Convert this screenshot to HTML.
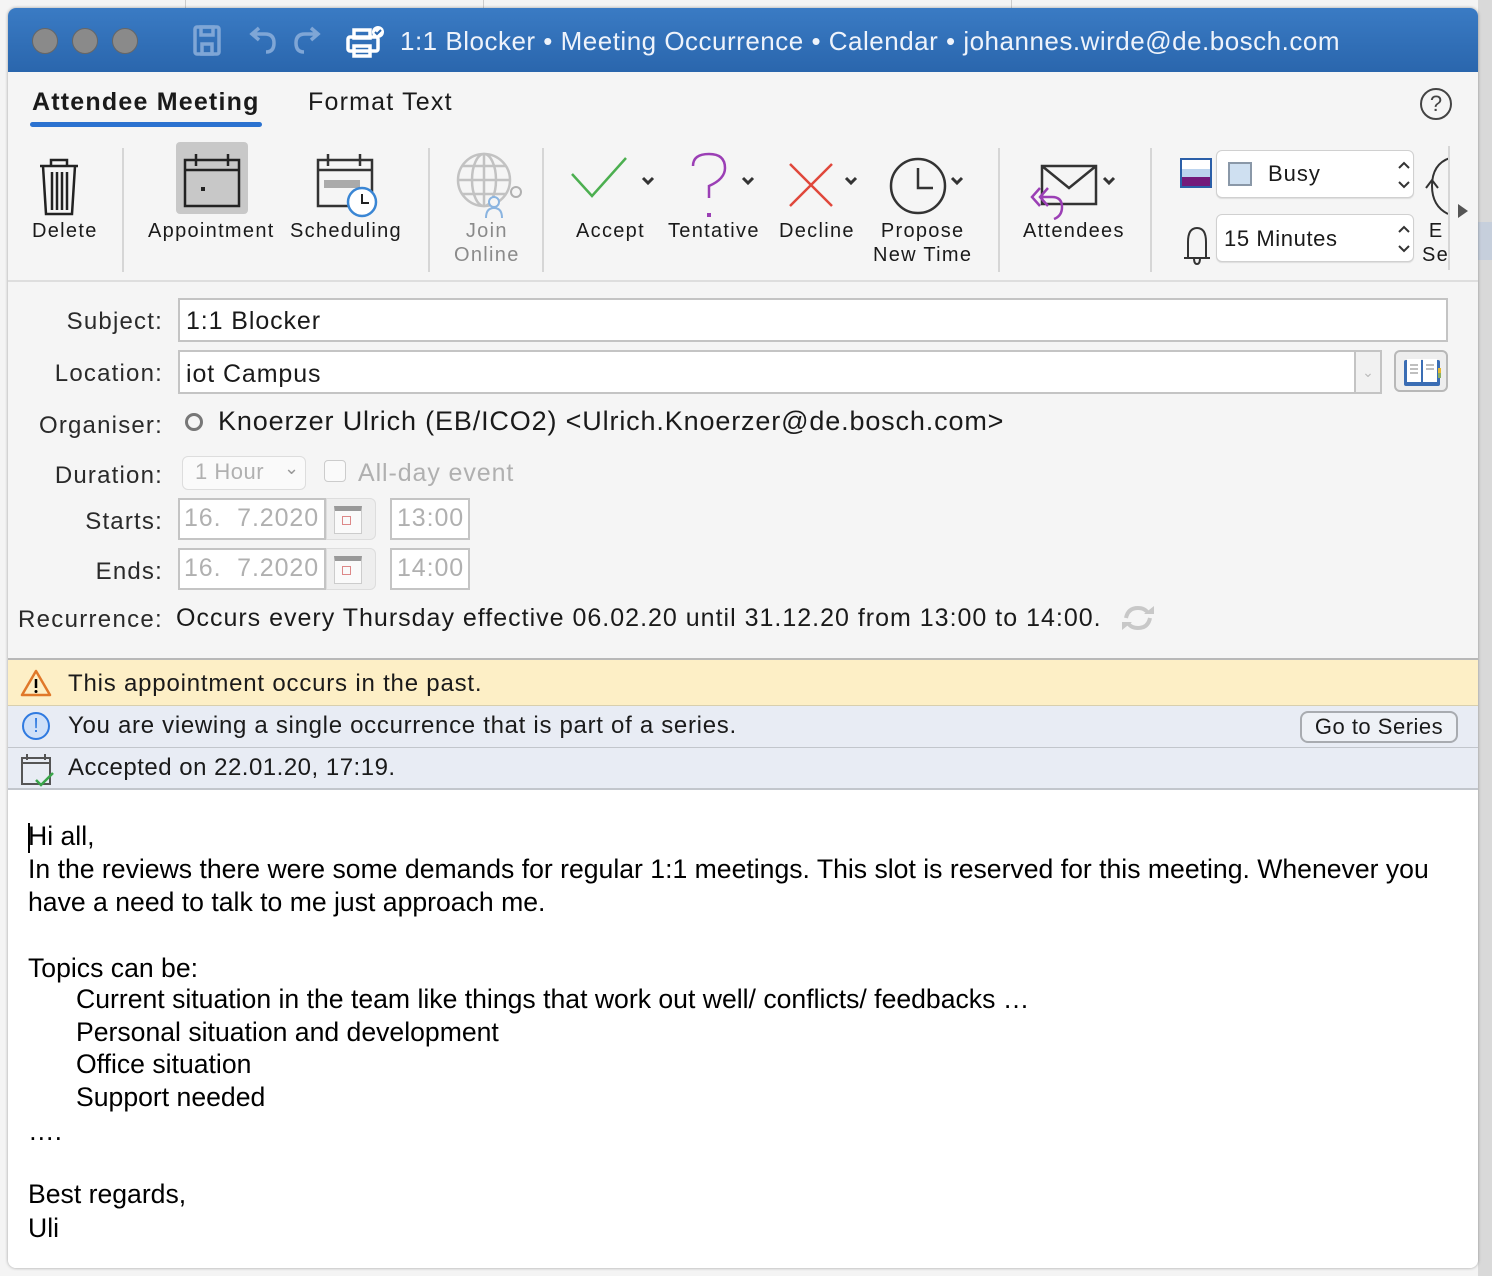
<!DOCTYPE html>
<html><head><meta charset="utf-8">
<style>
*{margin:0;padding:0;box-sizing:border-box}
body{width:1492px;height:1276px;overflow:hidden;background:#f4f4f4;font-family:"Liberation Sans",sans-serif;color:#1a1a1a;position:relative}
.a{position:absolute;white-space:nowrap}
.win{position:absolute;left:8px;top:8px;width:1470px;height:1260px;border-radius:8px;overflow:hidden;background:#f5f5f5;box-shadow:0 0 3px rgba(0,0,0,.35)}
.rl{font-size:20px;color:#1a1a1a;text-align:center;line-height:24px;letter-spacing:1.3px}
.lbl{font-size:24px;color:#2a2a2a;text-align:right;width:155px;left:0;letter-spacing:1.2px}
.sep{position:absolute;width:2px;background:#d6d6d6;top:140px;height:124px}
.box{position:absolute;background:#fff;border:2px solid #c4c4c4}
.dim{color:#b0b0b0}
.ls{letter-spacing:0.9px}
.body{font-size:26.6px;color:#000;line-height:33px}
</style></head><body>
<div class="a" style="left:1478px;top:0;width:14px;height:1276px;background:#d9d9d9"></div>
<div class="a" style="left:185px;top:0;width:1px;height:8px;background:#ccc"></div>
<div class="a" style="left:483px;top:0;width:1px;height:8px;background:#ccc"></div>
<div class="a" style="left:1011px;top:0;width:1px;height:8px;background:#ccc"></div>
<div class="a" style="left:1478px;top:222px;width:14px;height:38px;background:#c6cfdc"></div>

<div class="win">
 <div class="a" style="left:0;top:0;width:1470px;height:64px;background:linear-gradient(#3a7bc4,#2a66ad)"></div>
 <div class="a" style="left:24px;top:20px;width:26px;height:26px;border-radius:50%;background:#8a8a8a;border:1px solid #666"></div>
 <div class="a" style="left:64px;top:20px;width:26px;height:26px;border-radius:50%;background:#8a8a8a;border:1px solid #666"></div>
 <div class="a" style="left:104px;top:20px;width:26px;height:26px;border-radius:50%;background:#8a8a8a;border:1px solid #666"></div>
 <svg class="a" style="left:180px;top:14px" width="200" height="40" viewBox="0 0 200 40">
  <g fill="none" stroke="#7fa6d6" stroke-width="3.5">
   <rect x="7" y="5" width="24" height="27" rx="2"/><rect x="13" y="5" width="12" height="8"/><rect x="14" y="22" width="10" height="10"/>
   <path d="M78 30 q8 0 8-9 q0-9-9-9 h-12 M71 6 l-7 6 7 6"/>
   <path d="M116 30 q-8 0-8-9 q0-9 9-9 h12 M123 6 l7 6-7 6"/>
  </g>
  <g fill="none" stroke="#fff" stroke-width="3.5">
   <rect x="160" y="15" width="30" height="14" rx="2"/><rect x="166" y="8" width="16" height="8"/><rect x="166" y="24" width="16" height="10"/>
  </g>
  <circle cx="190" cy="10" r="6" fill="#fff"/><path d="M187 10 l2 2 4-4" stroke="#2a66ad" stroke-width="2" fill="none"/>
 </svg>
 <div class="a" style="left:392px;top:18px;font-size:26px;color:#eef3fb;line-height:30px;letter-spacing:0.5px">1:1 Blocker • Meeting Occurrence • Calendar • johannes.wirde@de.bosch.com</div>

 <div class="a" style="left:24px;top:80px;font-size:25px;font-weight:bold;color:#1a1a1a;letter-spacing:1.2px">Attendee Meeting</div>
 <div class="a" style="left:22px;top:114px;width:232px;height:5px;border-radius:3px;background:#2b72d0"></div>
 <div class="a" style="left:300px;top:80px;font-size:25px;color:#1a1a1a;letter-spacing:1.2px">Format Text</div>
 <div class="a" style="left:1412px;top:80px;width:32px;height:32px;border-radius:50%;border:2px solid #444;font-size:22px;text-align:center;line-height:28px;color:#444">?</div>

 <svg class="a" style="left:30px;top:140px" width="50" height="70"><g fill="none" stroke="#222" stroke-width="2.5"><path d="M2 18h38M13 18v-6h16v6"/><path d="M5 18l3 48h26l3-48"/><path d="M14 24v38M19 24v38M24 24v38M29 24v38"/></g></svg>
 <div class="a rl" style="left:24px;top:211px">Delete</div>
 <div class="sep" style="left:114px"></div>
 <div class="a" style="left:168px;top:134px;width:72px;height:72px;border-radius:4px;background:#c8c8c8"></div>
 <svg class="a" style="left:174px;top:142px" width="62" height="62"><g fill="none" stroke="#222" stroke-width="2.5"><rect x="3" y="10" width="54" height="46"/><path d="M3 20h54M14 4v12M46 4v12"/></g><rect x="19" y="37" width="4" height="4" fill="#222"/></svg>
 <div class="a rl" style="left:140px;top:211px">Appointment</div>
 <svg class="a" style="left:306px;top:142px" width="70" height="70"><g fill="none" stroke="#333" stroke-width="2.5"><rect x="4" y="10" width="54" height="46"/><path d="M4 20h54M14 4v12M46 4v12"/></g><rect x="10" y="30" width="36" height="8" fill="#aaa"/><circle cx="48" cy="52" r="14" fill="#fff" stroke="#3a86d4" stroke-width="2.5"/><path d="M48 44v9h7" stroke="#222" stroke-width="2" fill="none"/></svg>
 <div class="a rl" style="left:282px;top:211px">Scheduling</div>
 <div class="sep" style="left:420px"></div>
 <svg class="a" style="left:446px;top:140px" width="70" height="70"><g fill="none" stroke="#c2c2c2" stroke-width="2.5"><circle cx="30" cy="32" r="26"/><ellipse cx="30" cy="32" rx="12" ry="26"/><path d="M4 32h52M8 18h44M8 46h44M30 6v52"/></g><circle cx="62" cy="44" r="5" fill="#f5f5f5" stroke="#b0b0b0" stroke-width="2"/><circle cx="40" cy="54" r="5" fill="#f5f5f5" stroke="#8ab4e0" stroke-width="2"/><path d="M32 70q0-10 8-10q8 0 8 10" stroke="#8ab4e0" stroke-width="2" fill="none"/></svg>
 <div class="a rl" style="left:446px;top:211px;color:#8a8a8a">Join<br>Online</div>
 <div class="sep" style="left:534px"></div>
 <svg class="a" style="left:560px;top:140px" width="600" height="80"><g fill="none" stroke-width="2.5">
  <path d="M4 26l20 22 34-38" stroke="#4caf50"/>
  <path d="M75 30l5 5 5-5M175 30l5 5 5-5M278 30l5 5 5-5M384 30l5 5 5-5M536 30l5 5 5-5" stroke="#333" stroke-width="3"/>
  <path d="M125 18q0-12 16-12q16 0 16 14q0 11-16 18v12" stroke="#9b3fb5"/>
  <path d="M222 16l42 42M264 16l-42 42" stroke="#e0473b"/>
  <circle cx="350" cy="38" r="27" stroke="#333"/><path d="M350 20v20h15" stroke="#333"/>
  <path d="M474 18h54v38h-54zM474 18l27 22 27-22" stroke="#333" fill="#f5f5f5"/>
 </g><rect x="139" y="65" width="4" height="4" fill="#9b3fb5"/></svg>
 <svg class="a" style="left:1018px;top:172px" width="40" height="40"><path d="M14 8l-8 9 8 9M22 8l-8 9 8 9M14 17h12q10 0 10 10q0 9-8 12" fill="none" stroke="#9b3fb5" stroke-width="2.5"/></svg>
 <div class="a rl" style="left:568px;top:211px">Accept</div>
 <div class="a rl" style="left:660px;top:211px">Tentative</div>
 <div class="a rl" style="left:771px;top:211px">Decline</div>
 <div class="a rl" style="left:865px;top:211px">Propose<br>New Time</div>
 <div class="sep" style="left:990px"></div>
 <div class="a rl" style="left:1015px;top:211px">Attendees</div>
 <div class="sep" style="left:1142px"></div>
 <div class="a" style="left:1172px;top:150px;width:32px;height:30px;border:2px solid #2b5fa8;background:linear-gradient(#fff 0 35%,#bcd4ee 35% 65%,#731a7a 65%)"></div>
 <div class="a" style="left:1208px;top:142px;width:198px;height:48px;background:#fff;border:1px solid #d0d0d0;border-radius:6px;box-shadow:0 1px 1px rgba(0,0,0,.1)"></div>
 <div class="a" style="left:1220px;top:154px;width:24px;height:24px;background:#cfe0f1;border:2px solid #8a98a8"></div>
 <div class="a" style="left:1260px;top:153px;font-size:22px;letter-spacing:1px">Busy</div>
 <svg class="a" style="left:1388px;top:152px" width="16" height="30"><path d="M3 8l5-5 5 5M3 22l5 5 5-5" fill="none" stroke="#333" stroke-width="2"/></svg>
 <svg class="a" style="left:1172px;top:214px" width="36" height="44"><path d="M4 36h26M8 36v-16q0-14 9-14q9 0 9 14v16M14 36q0 6 3 6q3 0 3-6" fill="none" stroke="#333" stroke-width="2"/></svg>
 <div class="a" style="left:1208px;top:206px;width:198px;height:48px;background:#fff;border:1px solid #d0d0d0;border-radius:6px;box-shadow:0 1px 1px rgba(0,0,0,.1)"></div>
 <div class="a" style="left:1216px;top:218px;font-size:22px;letter-spacing:0.6px">15 Minutes</div>
 <svg class="a" style="left:1388px;top:216px" width="16" height="30"><path d="M3 8l5-5 5 5M3 22l5 5 5-5" fill="none" stroke="#333" stroke-width="2"/></svg>
 <svg class="a" style="left:1414px;top:140px" width="28" height="70"><path d="M28 10q-18 6-18 28q0 20 16 28M4 40l6-8 6 8" fill="none" stroke="#333" stroke-width="2"/></svg>
 <div class="a rl" style="left:1414px;top:211px;text-align:left">&nbsp;E<br>Se</div>
 <div class="a" style="left:1440px;top:138px;width:30px;height:124px;background:#f5f5f5;border-left:2px solid #d6d6d6"></div>
 <div class="a" style="left:1450px;top:196px;width:0;height:0;border-left:10px solid #555;border-top:7px solid transparent;border-bottom:7px solid transparent"></div>
 <div class="a" style="left:0;top:272px;width:1470px;height:2px;background:#dedede"></div>

 <div class="a lbl" style="top:300px">Subject:</div>
 <div class="box" style="left:170px;top:290px;width:1270px;height:44px"></div>
 <div class="a ls" style="left:178px;top:299px;font-size:25px">1:1 Blocker</div>
 <div class="a lbl" style="top:352px">Location:</div>
 <div class="box" style="left:170px;top:342px;width:1204px;height:44px"></div>
 <div class="a" style="left:1346px;top:344px;width:26px;height:40px;background:#f1f1f1;border-left:2px solid #c4c4c4;color:#bbb;font-size:14px;text-align:center;line-height:40px">⌄</div>
 <div class="a ls" style="left:178px;top:352px;font-size:25px">iot Campus</div>
 <div class="a" style="left:1386px;top:342px;width:54px;height:42px;border:2px solid #b8b8b8;border-radius:6px;background:#eee"></div>
 <svg class="a" style="left:1394px;top:348px" width="40" height="32"><rect x="2" y="4" width="36" height="26" rx="2" fill="#3a6db4"/><path d="M5 3h14v23H5zM21 3h14v23H21z" fill="#fff"/><path d="M8 9h8M8 13h8M8 17h8M24 9h8M24 13h8" stroke="#aaa" stroke-width="1.5"/><rect x="36" y="12" width="3" height="5" fill="#e8b830"/><rect x="36" y="17" width="3" height="5" fill="#8cb060"/></svg>
 <div class="a lbl" style="top:404px">Organiser:</div>
 <div class="a" style="left:177px;top:405px;width:18px;height:18px;border-radius:50%;border:3px solid #777"></div>
 <div class="a" style="left:210px;top:398px;font-size:27px;letter-spacing:0.85px">Knoerzer Ulrich (EB/ICO2) &lt;Ulrich.Knoerzer@de.bosch.com&gt;</div>
 <div class="a lbl" style="top:454px">Duration:</div>
 <div class="a" style="left:174px;top:448px;width:124px;height:34px;border:1px solid #ddd;border-radius:6px;background:#fafafa"></div>
 <div class="a dim" style="left:187px;top:451px;font-size:22px;letter-spacing:0.5px">1 Hour</div>
 <div class="a" style="left:276px;top:450px;font-size:18px;color:#999">⌄</div>
 <div class="a" style="left:316px;top:452px;width:22px;height:22px;border:1px solid #ccc;border-radius:4px;background:#fafafa"></div>
 <div class="a dim ls" style="left:350px;top:451px;font-size:25px">All-day event</div>
 <div class="a lbl" style="top:500px">Starts:</div>
 <div class="a lbl" style="top:550px">Ends:</div>
 <div class="box" style="left:170px;top:490px;width:148px;height:42px"></div>
 <div class="a dim ls" style="left:176px;top:496px;font-size:25px">16.&nbsp;&nbsp;7.2020</div>
 <div class="a" style="left:318px;top:490px;width:50px;height:42px;background:#eee;border:1px solid #ddd;border-radius:0 6px 6px 0"></div>
 <div class="a" style="left:326px;top:498px;width:28px;height:28px;border:1px solid #ccc;border-top:5px solid #999;background:#fafafa"></div>
 <div class="a" style="left:334px;top:508px;width:9px;height:9px;border:1.5px solid #d88"></div>
 <div class="box" style="left:382px;top:490px;width:80px;height:42px"></div>
 <div class="a dim ls" style="left:389px;top:496px;font-size:25px">13:00</div>
 <div class="box" style="left:170px;top:540px;width:148px;height:42px"></div>
 <div class="a dim ls" style="left:176px;top:546px;font-size:25px">16.&nbsp;&nbsp;7.2020</div>
 <div class="a" style="left:318px;top:540px;width:50px;height:42px;background:#eee;border:1px solid #ddd;border-radius:0 6px 6px 0"></div>
 <div class="a" style="left:326px;top:548px;width:28px;height:28px;border:1px solid #ccc;border-top:5px solid #999;background:#fafafa"></div>
 <div class="a" style="left:334px;top:558px;width:9px;height:9px;border:1.5px solid #d88"></div>
 <div class="box" style="left:382px;top:540px;width:80px;height:42px"></div>
 <div class="a dim ls" style="left:389px;top:546px;font-size:25px">14:00</div>
 <div class="a" style="left:10px;top:598px;font-size:24px;color:#2a2a2a;letter-spacing:1.3px">Recurrence:</div>
 <div class="a" style="left:168px;top:596px;font-size:25px;letter-spacing:1px">Occurs every Thursday effective 06.02.20 until 31.12.20 from 13:00 to 14:00.</div>
 <svg class="a" style="left:1110px;top:596px" width="40" height="28"><path d="M8 14q2-10 12-10q7 0 10 5M32 14q-2 10-12 10q-7 0-10-5" fill="none" stroke="#c8c8c8" stroke-width="4"/><path d="M26 10h10v-8zM14 18h-10v8z" fill="#c8c8c8"/></svg>

 <div class="a" style="left:0;top:650px;width:1470px;height:2px;background:#b8b8b8"></div>
 <div class="a" style="left:0;top:652px;width:1470px;height:46px;background:#fdefc6;border-bottom:1px solid #d8cfae"></div>
 <svg class="a" style="left:12px;top:660px" width="32" height="30"><path d="M16 3L2 27h28z" fill="#fdefc6" stroke="#e0782a" stroke-width="2.5" stroke-linejoin="round"/><path d="M16 11v9" stroke="#000" stroke-width="2.5"/><circle cx="16" cy="23.5" r="1.5"/></svg>
 <div class="a" style="left:60px;top:662px;font-size:24px;letter-spacing:0.8px">This appointment occurs in the past.</div>
 <div class="a" style="left:0;top:698px;width:1470px;height:42px;background:#e8ecf4;border-bottom:1px solid #c2c6cc"></div>
 <div class="a" style="left:14px;top:704px;width:28px;height:28px;border-radius:50%;border:2px solid #2f7ae0;background:#cfe0f8;color:#2f7ae0;font-size:20px;text-align:center;line-height:24px">!</div>
 <div class="a" style="left:60px;top:704px;font-size:24px;letter-spacing:0.7px">You are viewing a single occurrence that is part of a series.</div>
 <div class="a" style="left:1292px;top:703px;width:158px;height:32px;border:2px solid #a8abb0;border-radius:8px;background:#eef1f6;font-size:22px;text-align:center;line-height:28px;letter-spacing:0.5px">Go to Series</div>
 <div class="a" style="left:0;top:740px;width:1470px;height:42px;background:#e8ecf4;border-bottom:2px solid #c2c6cc"></div>
 <svg class="a" style="left:12px;top:744px" width="36" height="36"><g fill="none" stroke="#555" stroke-width="2"><path d="M2 6h28v26H2zM2 11h28M7 2v6M25 2v6"/></g><path d="M16 28l5 5 12-12" stroke="#3aa54a" stroke-width="2.5" fill="none"/></svg>
 <div class="a" style="left:60px;top:746px;font-size:24px;letter-spacing:0.5px">Accepted on 22.01.20, 17:19.</div>

 <div class="a" style="left:0;top:782px;width:1470px;height:478px;background:#fff"></div>
 <div class="a" style="left:20px;top:815px;width:2px;height:30px;background:#000"></div>
 <div class="a body" style="left:20px;top:812px">Hi all,<br>In the reviews there were some demands for regular 1:1 meetings. This slot is reserved for this meeting. Whenever you<br>have a need to talk to me just approach me.<br><br>Topics can be:</div>
 <div class="a body" style="left:68px;top:975px;line-height:32.5px">Current situation in the team like things that work out well/ conflicts/ feedbacks …<br>Personal situation and development<br>Office situation<br>Support needed</div>
 <div class="a body" style="left:20px;top:1107px">….</div>
 <div class="a body" style="left:20px;top:1169px;line-height:34px">Best regards,<br>Uli</div>
</div>
</body></html>
